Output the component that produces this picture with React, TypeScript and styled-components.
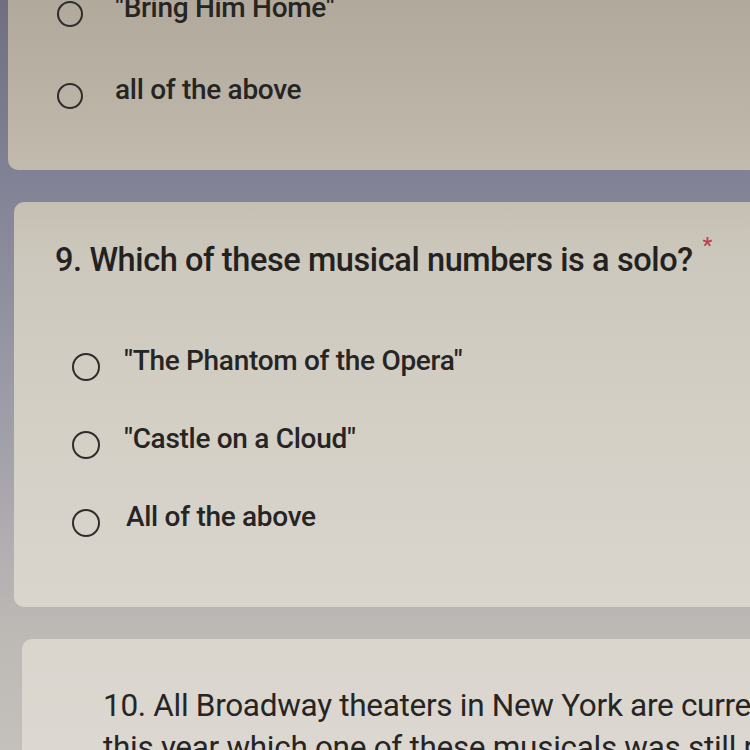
import React from "react";
import styled, { createGlobalStyle } from "styled-components";

const GlobalStyle = createGlobalStyle`
  html, body {
    margin: 0;
    padding: 0;
  }
  body {
    background: linear-gradient(180deg, #6f6e82 0%, #838397 25%, #a3a2aa 60%, #bdbab6 85%, #c4c1bc 100%);
    background-attachment: fixed;
    font-family: Roboto, "Liberation Sans", Arial, sans-serif;
    color: #262626;
  }
`;

const Page = styled.div`
  height: 750px;
  overflow: hidden;
  display: flex;
  flex-direction: column;
  gap: 32px;
  padding-left: 8px;
  box-sizing: border-box;
`;

const Card = styled.section<{ $indent: number; $first?: boolean }>`
  margin-left: ${(p) => p.$indent}px;
  margin-top: ${(p) => (p.$first ? "-27px" : "0")};
  border-radius: ${(p) => (p.$first ? "0 0 0 10px" : "10px 0 0 10px")};
  background: linear-gradient(
    180deg,
    #b1a99b 0%,
    #bfb8ab 20%,
    #cdc8bd 35%,
    #d4cfc5 55%,
    #d9d5cd 80%,
    #dcd8d1 100%
  );
  background-attachment: fixed;
  display: flex;
  flex-direction: column;
`;

const Options = styled.div<{ $left: number; $bottom: number }>`
  display: flex;
  flex-direction: column;
  padding-left: ${(p) => p.$left}px;
  padding-bottom: ${(p) => p.$bottom}px;
`;

const OptionRow = styled.label<{ $h: number; $gap: number }>`
  display: flex;
  align-items: center;
  height: ${(p) => p.$h}px;
  gap: ${(p) => p.$gap}px;
`;

const Radio = styled.span<{ $size: number }>`
  flex: none;
  width: ${(p) => p.$size}px;
  height: ${(p) => p.$size}px;
  border-radius: 50%;
  border: 2.5px solid #2e2d2c;
  box-sizing: border-box;
`;

const OptionText = styled.span<{ $size: number }>`
  font-size: ${(p) => p.$size}px;
  font-weight: 500;
  letter-spacing: -0.3px;
  color: #262524;
  white-space: nowrap;
  line-height: 1;
  margin-top: -12px;
`;

const Question = styled.h2`
  margin: 0;
  padding: 38px 0 0 41px;
  font-size: 32.5px;
  line-height: 40px;
  font-weight: 500;
  letter-spacing: -0.4px;
  color: #232221;
  white-space: nowrap;
`;

const Asterisk = styled.span`
  color: #c0404a;
  font-size: 22px;
  vertical-align: top;
  margin-left: 10px;
  position: relative;
  top: -14px;
`;

const OptionGroup = styled.div`
  margin-top: 48px;
`;

const NextQuestion = styled.p`
  margin: 0;
  padding: 46px 0 0 81px;
  font-size: 31.5px;
  line-height: 42px;
  font-weight: 400;
  letter-spacing: -0.3px;
  color: #262524;
  white-space: nowrap;
`;

export default function App() {
  return (
    <>
      <GlobalStyle />
      <Page>
        <Card $indent={0} $first>
          <Options $left={49} $bottom={33}>
            <OptionRow $h={82} $gap={32}>
              <Radio $size={26} />
              <OptionText $size={28}>"Bring Him Home"</OptionText>
            </OptionRow>
            <OptionRow $h={82} $gap={32}>
              <Radio $size={26} />
              <OptionText $size={28}>all of the above</OptionText>
            </OptionRow>
          </Options>
        </Card>

        <Card $indent={6}>
          <Question>
            9. Which of these musical numbers is a solo?
            <Asterisk>*</Asterisk>
          </Question>
          <OptionGroup>
            <Options $left={58} $bottom={45}>
              <OptionRow $h={78} $gap={24}>
                <Radio $size={28} />
                <OptionText $size={28}>"The Phantom of the Opera"</OptionText>
              </OptionRow>
              <OptionRow $h={78} $gap={24}>
                <Radio $size={28} />
                <OptionText $size={28}>"Castle on a Cloud"</OptionText>
              </OptionRow>
              <OptionRow $h={78} $gap={26}>
                <Radio $size={28} />
                <OptionText $size={28}>All of the above</OptionText>
              </OptionRow>
            </Options>
          </OptionGroup>
        </Card>

        <Card $indent={14}>
          <NextQuestion>
            10. All Broadway theaters in New York are currently closed, but
            <br />
            this year which one of these musicals was still running?
          </NextQuestion>
        </Card>
      </Page>
    </>
  );
}
